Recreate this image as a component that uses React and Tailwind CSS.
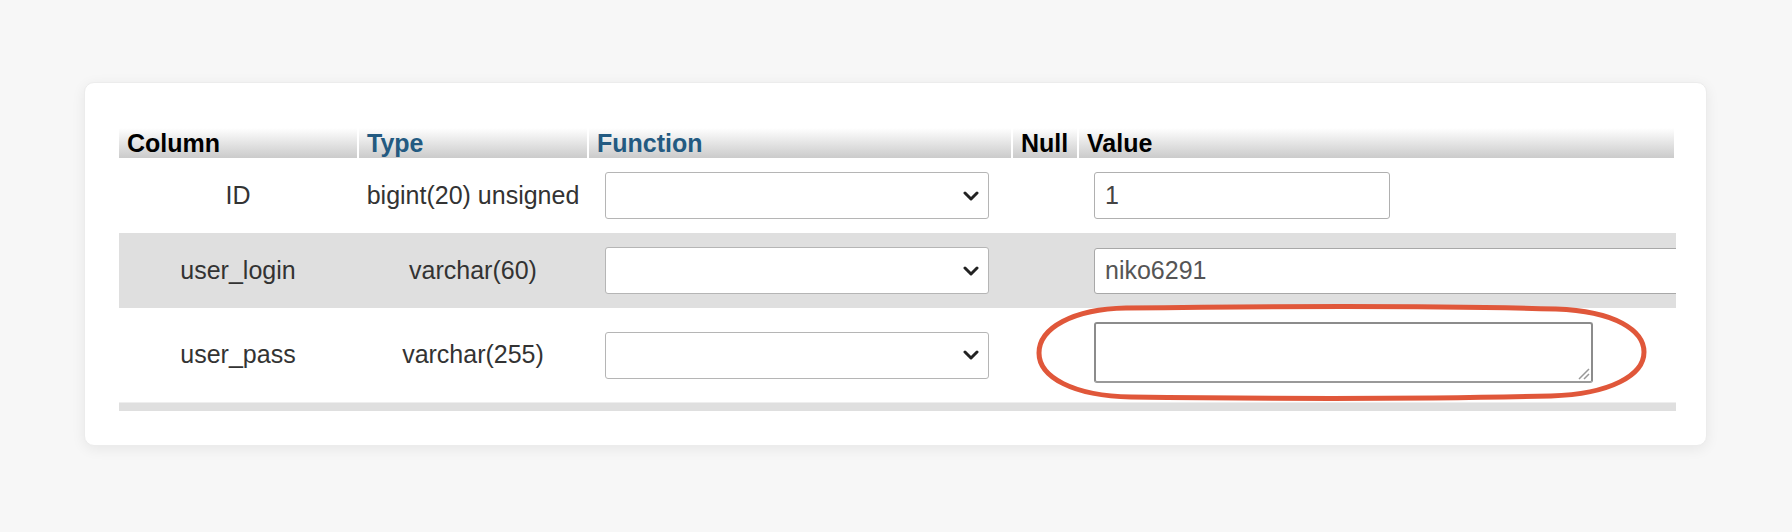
import React from "react";

function Chevron() {
  return (
    <svg width="16" height="10" viewBox="0 0 16 10" className="block">
      <path d="M2 2 L8 8 L14 2" fill="none" stroke="#222" strokeWidth="3" strokeLinecap="round" strokeLinejoin="round" />
    </svg>
  );
}

function FuncSelect() {
  return (
    <div className="ml-[16px] w-[384px] h-[47px] bg-white border border-[#b5b5b5] rounded-[3px] flex items-center justify-end pr-[9px]">
      <Chevron />
    </div>
  );
}

const grid = "grid grid-cols-[240px_230px_424px_66px_1fr]";

function HeadCell({ children, blue }) {
  return (
    <div
      className={
        "mr-[2px] h-[30px] bg-linear-to-b from-white to-[#cbcbcb] pl-[8px] text-[25px] leading-[30px] font-bold whitespace-nowrap " +
        (blue ? "text-[#235a81]" : "text-black")
      }
    >
      {children}
    </div>
  );
}

function Row({ name, type, gray, tall, value }) {
  return (
    <div className={grid + " items-center " + (tall ? "h-[94px] " : "h-[75px] ") + (gray ? "bg-[#dfdfdf]" : "bg-white")}>
      <div className="pr-[2px] text-center text-[25px] text-[#333]">{name}</div>
      <div className="pr-[2px] text-center text-[25px] text-[#333] whitespace-nowrap">{type}</div>
      <div>
        <FuncSelect />
      </div>
      <div></div>
      <div className="pl-[15px]">{value}</div>
    </div>
  );
}

export default function App() {
  return (
    <div
      className="w-[1792px] h-[532px] bg-[#f7f7f7] pt-[82px] pl-[84px]"
      style={{ fontFamily: '"Liberation Sans", Arial, sans-serif' }}
    >
      <div className="relative w-[1623px] h-[364px] bg-white rounded-[10px] border border-[#ececec] shadow-[0_3px_14px_rgba(0,0,0,0.07)] pt-[45px] pl-[34px]">
        <div className="w-[1557px] overflow-hidden">
          <div className={grid}>
            <HeadCell>Column</HeadCell>
            <HeadCell blue>Type</HeadCell>
            <HeadCell blue>Function</HeadCell>
            <HeadCell>Null</HeadCell>
            <HeadCell>Value</HeadCell>
          </div>
          <Row
            name="ID"
            type="bigint(20) unsigned"
            value={
              <div className="w-[296px] h-[47px] bg-white border border-[#b0b0b0] rounded-[3px] flex items-center pl-[10px] text-[25px] text-[#444]">
                1
              </div>
            }
          />
          <Row
            name="user_login"
            type="varchar(60)"
            gray
            value={
              <div className="w-[720px] h-[46px] bg-white border border-[#a8a8a8] rounded-[3px] flex items-center pl-[10px] text-[25px] text-[#555]">
                niko6291
              </div>
            }
          />
          <Row
            name="user_pass"
            type="varchar(255)"
            tall
            value={
              <div className="relative -mt-[6px] w-[499px] h-[61px] bg-white border-2 border-[#8c8c8c] border-b-[#999] rounded-[3px]">
                <svg width="14" height="14" viewBox="0 0 14 14" className="absolute right-[1px] bottom-[1px]">
                  <path d="M13 3 L3 13 M13 8 L8 13" stroke="#999" strokeWidth="1.5" />
                </svg>
              </div>
            }
          />
          <div className="h-[9px] bg-[#dfdfdf] border-t border-[#eeeeee]"></div>
        </div>
        <svg
          className="absolute left-[946px] top-[218px]"
          width="620"
          height="102"
          viewBox="0 0 620 102"
        >
          <path
            d="M95 7 C 250 5, 420 5, 525 8 C 585 10, 613 30, 613 51 C 613 74, 580 93, 520 95 C 400 98, 250 98, 100 96 C 42 95, 8 76, 8 52 C 8 27, 42 8, 95 7 Z"
            fill="none"
            stroke="#e0573a"
            strokeWidth="5"
          />
        </svg>
      </div>
    </div>
  );
}
